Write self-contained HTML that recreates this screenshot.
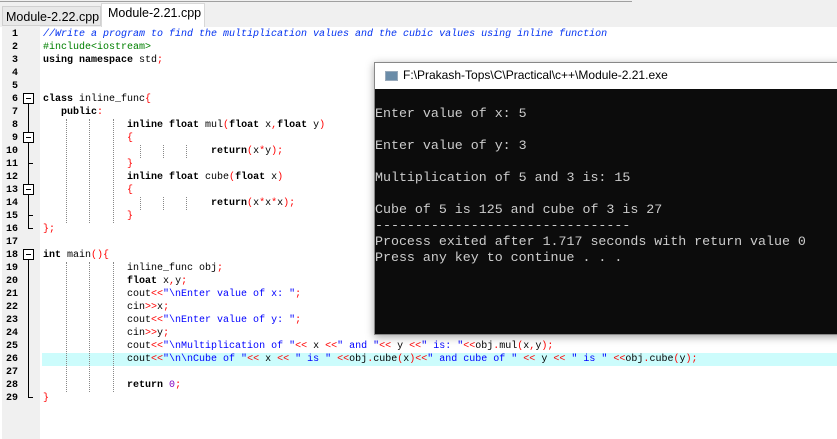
<!DOCTYPE html>
<html><head><meta charset="utf-8"><style>
body{margin:0;width:837px;height:439px;overflow:hidden;background:#fff;position:relative;font-family:"Liberation Sans",sans-serif}
.topbar{position:absolute;left:0;top:0;width:837px;height:27px;background:#f0f0f0}
.topline{position:absolute;left:0;top:1px;width:632px;height:1px;background:#a0a0a0}
.tab{position:absolute;font-size:12.5px;color:#000;box-sizing:border-box}
.gut{position:absolute;left:2px;top:27px;width:38px;height:412px;background:#f0f0f0}
.ln{position:absolute;left:0;width:16px;text-align:right;font:bold 10px/13px "Liberation Mono",monospace;color:#000}
.cl{position:absolute;left:43px;font:10px/13px "Liberation Mono",monospace;white-space:pre;color:#000}
b{font-weight:bold}
.r{color:#ff0000}
.s{color:#0000ff}
.c{color:#0030f0;font-style:italic}
.g{color:#008000}
.n{color:#8000c0}
.fb{position:absolute;left:23px;width:9px;height:9px;border:1px solid #000;background:#fff}
.fb:after{content:"";position:absolute;left:2px;top:4px;width:5px;height:1px;background:#000}
.vl{position:absolute;left:28px;width:1px;background:#000}
.tk{position:absolute;left:28px;width:5px;height:1px;background:#000}
.dg{position:absolute;width:0;border-left:1px dotted #888}
.con{position:absolute;left:374px;top:62px;width:470px;height:271px;background:#0c0c0c;border:1px solid #888;box-shadow:0 2px 8px rgba(0,0,0,.35)}
.tt{position:absolute;left:0;top:0;right:0;height:26px;background:#fff;font-size:12px;color:#000}
.ct{position:absolute;left:0;top:27px;font:13.3px/16px "Liberation Mono",monospace;color:#ccc;white-space:pre}
</style></head><body>
<div class="topbar"></div><div class="topline"></div>
<div class="tab" style="left:2px;top:6px;width:99px;height:20px;background:#e8e8e8;border:1px solid #d0d0d0;padding:3px 0 0 3px">Module-2.22.cpp</div>
<div class="tab" style="left:101px;top:3px;width:104px;height:24px;background:#fff;border:1px solid #d8d8d8;border-bottom:none;padding:2px 0 0 6px">Module-2.21.cpp</div>
<div style="position:absolute;left:42px;top:353px;width:795px;height:13px;background:#ccfcfc"></div>
<div class="gut">
<div class="ln" style="top:1px">1</div><div class="ln" style="top:14px">2</div><div class="ln" style="top:27px">3</div><div class="ln" style="top:40px">4</div><div class="ln" style="top:53px">5</div><div class="ln" style="top:66px">6</div><div class="ln" style="top:79px">7</div><div class="ln" style="top:92px">8</div><div class="ln" style="top:105px">9</div><div class="ln" style="top:118px">10</div><div class="ln" style="top:131px">11</div><div class="ln" style="top:144px">12</div><div class="ln" style="top:157px">13</div><div class="ln" style="top:170px">14</div><div class="ln" style="top:183px">15</div><div class="ln" style="top:196px">16</div><div class="ln" style="top:209px">17</div><div class="ln" style="top:222px">18</div><div class="ln" style="top:235px">19</div><div class="ln" style="top:248px">20</div><div class="ln" style="top:261px">21</div><div class="ln" style="top:274px">22</div><div class="ln" style="top:287px">23</div><div class="ln" style="top:300px">24</div><div class="ln" style="top:313px">25</div><div class="ln" style="top:326px">26</div><div class="ln" style="top:339px">27</div><div class="ln" style="top:352px">28</div><div class="ln" style="top:365px">29</div>
</div>
<!-- fold markers -->
<div class="vl" style="top:103px;height:126px"></div>
<div class="fb" style="top:93px"></div>
<div class="fb" style="top:132px"></div>
<div class="fb" style="top:184px"></div>
<div class="tk" style="top:163px"></div><div class="tk" style="top:215px"></div><div class="tk" style="top:228px"></div>
<div class="vl" style="top:259px;height:139px"></div>
<div class="fb" style="top:249px"></div>
<div class="tk" style="top:397px"></div>
<!-- indent guides -->
<div class="dg" style="left:66px;top:119px;height:104px"></div><div class="dg" style="left:89px;top:119px;height:104px"></div><div class="dg" style="left:113px;top:119px;height:104px"></div>
<div class="dg" style="left:140px;top:145px;height:13px"></div><div class="dg" style="left:163px;top:145px;height:13px"></div><div class="dg" style="left:186px;top:145px;height:13px"></div>
<div class="dg" style="left:140px;top:197px;height:13px"></div><div class="dg" style="left:163px;top:197px;height:13px"></div><div class="dg" style="left:186px;top:197px;height:13px"></div>
<div class="dg" style="left:66px;top:262px;height:130px"></div><div class="dg" style="left:89px;top:262px;height:130px"></div><div class="dg" style="left:113px;top:262px;height:130px"></div>
<!-- code -->
<div class="cl" style="top:28px"><span class="c">//Write a program to find the multiplication values and the cubic values using inline function</span></div>
<div class="cl" style="top:41px"><span class="g">#include&lt;iostream&gt;</span></div>
<div class="cl" style="top:54px"><b>using namespace</b> std<span class="r">;</span></div>
<div class="cl" style="top:93px"><b>class</b> inline_func<span class="r">{</span></div>
<div class="cl" style="top:106px">   <b>public</b><span class="r">:</span></div>
<div class="cl" style="top:119px">              <b>inline float</b> mul<span class="r">(</span><b>float</b> x<span class="r">,</span><b>float</b> y<span class="r">)</span></div>
<div class="cl" style="top:132px">              <span class="r">{</span></div>
<div class="cl" style="top:145px">                            <b>return</b><span class="r">(</span>x<span class="r">*</span>y<span class="r">);</span></div>
<div class="cl" style="top:158px">              <span class="r">}</span></div>
<div class="cl" style="top:171px">              <b>inline float</b> cube<span class="r">(</span><b>float</b> x<span class="r">)</span></div>
<div class="cl" style="top:184px">              <span class="r">{</span></div>
<div class="cl" style="top:197px">                            <b>return</b><span class="r">(</span>x<span class="r">*</span>x<span class="r">*</span>x<span class="r">);</span></div>
<div class="cl" style="top:210px">              <span class="r">}</span></div>
<div class="cl" style="top:223px"><span class="r">};</span></div>
<div class="cl" style="top:249px"><b>int</b> main<span class="r">(){</span></div>
<div class="cl" style="top:262px">              inline_func obj<span class="r">;</span></div>
<div class="cl" style="top:275px">              <b>float</b> x<span class="r">,</span>y<span class="r">;</span></div>
<div class="cl" style="top:288px">              cout<span class="r">&lt;&lt;</span><span class="s">"\nEnter value of x: "</span><span class="r">;</span></div>
<div class="cl" style="top:301px">              cin<span class="r">&gt;&gt;</span>x<span class="r">;</span></div>
<div class="cl" style="top:314px">              cout<span class="r">&lt;&lt;</span><span class="s">"\nEnter value of y: "</span><span class="r">;</span></div>
<div class="cl" style="top:327px">              cin<span class="r">&gt;&gt;</span>y<span class="r">;</span></div>
<div class="cl" style="top:340px">              cout<span class="r">&lt;&lt;</span><span class="s">"\nMultiplication of "</span><span class="r">&lt;&lt;</span> x <span class="r">&lt;&lt;</span><span class="s">" and "</span><span class="r">&lt;&lt;</span> y <span class="r">&lt;&lt;</span><span class="s">" is: "</span><span class="r">&lt;&lt;</span>obj<span class="r">.</span>mul<span class="r">(</span>x<span class="r">,</span>y<span class="r">);</span></div>
<div class="cl" style="top:353px">              cout<span class="r">&lt;&lt;</span><span class="s">"\n\nCube of "</span><span class="r">&lt;&lt;</span> x <span class="r">&lt;&lt;</span> <span class="s">" is "</span> <span class="r">&lt;&lt;</span>obj<span class="r">.</span>cube<span class="r">(</span>x<span class="r">)&lt;&lt;</span><span class="s">" and cube of "</span> <span class="r">&lt;&lt;</span> y <span class="r">&lt;&lt;</span> <span class="s">" is "</span> <span class="r">&lt;&lt;</span>obj<span class="r">.</span>cube<span class="r">(</span>y<span class="r">);</span></div>
<div class="cl" style="top:379px">              <b>return</b> <span class="n">0</span><span class="r">;</span></div>
<div class="cl" style="top:392px"><span class="r">}</span></div>
<!-- console -->
<div class="con">
<div class="tt"><div style="position:absolute;left:10px;top:8px;width:11px;height:8px;background:#6a8ca8;border:1px solid #9ab"></div><div style="position:absolute;left:28px;top:5px">F:\Prakash-Tops\C\Practical\c++\Module-2.21.exe</div></div>
<div class="ct">
Enter value of x: 5

Enter value of y: 3

Multiplication of 5 and 3 is: 15

Cube of 5 is 125 and cube of 3 is 27
--------------------------------
Process exited after 1.717 seconds with return value 0
Press any key to continue . . .</div>
</div>
</body></html>
